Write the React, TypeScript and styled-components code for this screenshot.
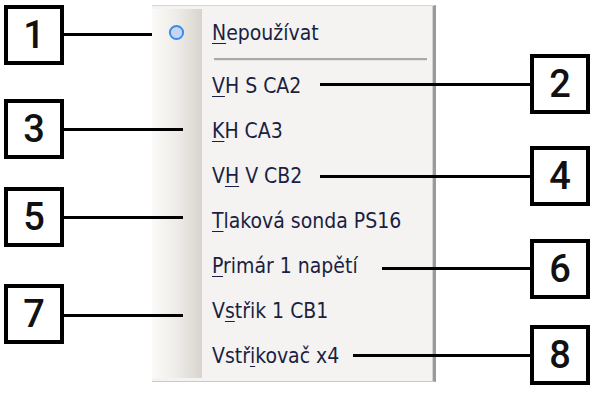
import React from "react";
import styled, { createGlobalStyle } from "styled-components";

const Global = createGlobalStyle`
  html, body { margin: 0; padding: 0; background: #ffffff; }
  #root { width: 594px; height: 400px; }
`;

const Page = styled.div`
  position: relative;
  width: 594px;
  height: 400px;
  overflow: hidden;
  background: #ffffff;
  padding: 5px 0 0 152px;
  box-sizing: border-box;
`;

const Menu = styled.div`
  width: 284px;
  box-sizing: border-box;
  background: #f4f3f1;
  border-top: 1px solid #d6d6d6;
  border-bottom: 1px solid #c9c9c9;
  border-right: 3px solid #9a9a9a;
  box-shadow: inset -1px 0 0 #d2d2d2;
  padding: 3px 0 3px 0;
  font-family: "DejaVu Sans Condensed", "DejaVu Sans", sans-serif;
  font-size: 21px;
  color: #1b1f42;
`;

const Row = styled.div<{ $h: number }>`
  display: grid;
  grid-template-columns: 50px 1fr;
  height: ${(p) => p.$h}px;
`;

const Gutter = styled.div`
  background: linear-gradient(to right, #fbfaf8 0%, #eeece8 50%, #d8d4cc 100%);
  display: flex;
  align-items: center;
  justify-content: center;
  padding-right: 2px;
`;

const RadioSvg = styled.svg`
  flex: 0 0 auto;
  width: 17px;
  height: 17px;
  display: block;
`;

const Label = styled.div`
  display: flex;
  align-items: center;
  padding-left: 10px;
`;

const Text = styled.span`
  white-space: pre;
  u { text-decoration: underline; text-decoration-thickness: 1px; text-underline-offset: 3px; }
`;

const SepCell = styled.div`
  display: flex;
  align-items: center;
  padding: 0 6px 0 12px;
`;

const SepLine = styled.div`
  flex: 1;
  height: 2px;
  background: #a9a9a9;
  border-bottom: 1px solid #e4e4e4;
`;

const Box = styled.div<{ $x: number; $y: number }>`
  position: absolute;
  left: ${(p) => p.$x}px;
  top: ${(p) => p.$y}px;
  width: 60px;
  height: 60px;
  box-sizing: border-box;
  border: 4px solid #000;
  background: #fff;
  display: flex;
  align-items: center;
  justify-content: center;
  font-family: Roboto, "Liberation Sans", sans-serif;
  font-weight: 500;
  font-size: 38px;
  color: #111;
`;

const Leader = styled.div<{ $x: number; $y: number; $w: number }>`
  position: absolute;
  left: ${(p) => p.$x}px;
  top: ${(p) => p.$y}px;
  width: ${(p) => p.$w}px;
  height: 3px;
  background: #000;
`;

const Radio = () => (
  <RadioSvg viewBox="0 0 17 17">
    <circle cx="8.5" cy="8.5" r="6.6" fill="#c6d5f6" stroke="#3a8ce6" strokeWidth="2" />
  </RadioSvg>
);

type Item = { pre: string; u: string; post: string };
const items: Item[] = [
  { pre: "", u: "V", post: "H S CA2" },
  { pre: "", u: "K", post: "H CA3" },
  { pre: "V", u: "H", post: " V CB2" },
  { pre: "", u: "T", post: "laková sonda PS16" },
  { pre: "", u: "P", post: "rimár 1 napětí" },
  { pre: "V", u: "s", post: "třik 1 CB1" },
  { pre: "Vstř", u: "i", post: "kovač x4" },
];

const boxes = [
  { n: "1", x: 4, y: 5 },
  { n: "3", x: 4, y: 99 },
  { n: "5", x: 4, y: 187 },
  { n: "7", x: 4, y: 284 },
  { n: "2", x: 530, y: 54 },
  { n: "4", x: 530, y: 146 },
  { n: "6", x: 530, y: 239 },
  { n: "8", x: 530, y: 325 },
];

const leaders = [
  { x: 64, y: 33, w: 88 },
  { x: 64, y: 128, w: 119 },
  { x: 64, y: 216, w: 119 },
  { x: 64, y: 314, w: 119 },
  { x: 320, y: 83, w: 210 },
  { x: 320, y: 175, w: 210 },
  { x: 382, y: 267, w: 148 },
  { x: 353, y: 354, w: 177 },
];

export default function App() {
  return (
    <>
      <Global />
      <Page>
        <Menu>
          <Row $h={47}>
            <Gutter>
              <Radio />
            </Gutter>
            <Label>
              <Text>
                <u>N</u>epoužívat
              </Text>
            </Label>
          </Row>
          <Row $h={7}>
            <Gutter />
            <SepCell>
              <SepLine />
            </SepCell>
          </Row>
          {items.map((it, i) => (
            <Row $h={45} key={i}>
              <Gutter />
              <Label>
                <Text>
                  {it.pre}
                  <u>{it.u}</u>
                  {it.post}
                </Text>
              </Label>
            </Row>
          ))}
        </Menu>
        {leaders.map((l, i) => (
          <Leader key={i} $x={l.x} $y={l.y} $w={l.w} />
        ))}
        {boxes.map((b) => (
          <Box key={b.n} $x={b.x} $y={b.y}>
            {b.n}
          </Box>
        ))}
      </Page>
    </>
  );
}
